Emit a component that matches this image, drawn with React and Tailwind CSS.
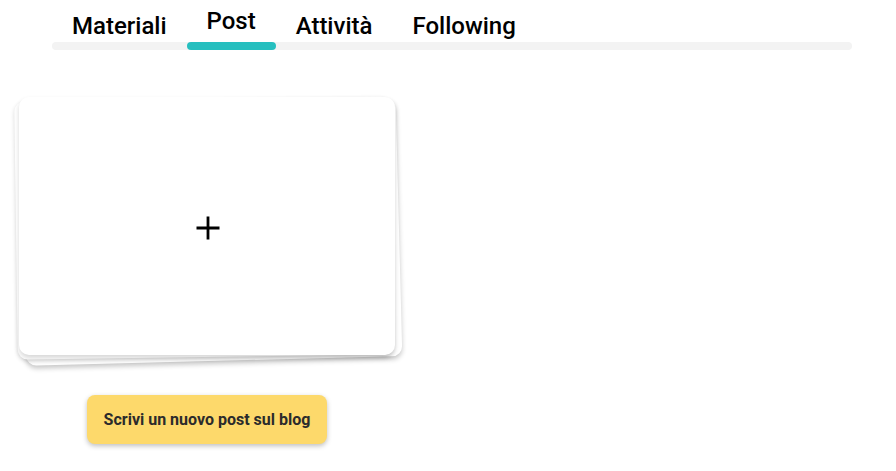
import React from "react";

const tabs = ["Materiali", "Post", "Attività", "Following"];

export default function App() {
  return (
    <div
      className="w-[896px] h-[471px] bg-white overflow-hidden"
      style={{ fontFamily: "Roboto, 'Liberation Sans', sans-serif" }}
    >
      <div className="ml-[52px] w-[800px] pt-[11px]">
        <div className="flex">
          {tabs.map((t, i) => (
            <div
              key={t}
              className={
                "px-[20px] h-[30px] leading-[30px] text-[24px] font-medium text-black " +
                (i === 1 ? "-translate-y-[5px]" : "")
              }
            >
              {t}
            </div>
          ))}
        </div>
        <div className="relative mt-[1px] h-[8px] rounded-full bg-[#f3f3f3]">
          <div className="absolute left-[135px] top-0 h-[8px] w-[89px] rounded-full bg-[#26bfbf]" />
        </div>
      </div>

      <div className="pl-[19px] pt-[47px] w-[395px]">
        <div className="relative w-[376px] h-[258px]">
          <div className="absolute inset-0 rounded-[10px] bg-white shadow-[0_3px_5px_rgba(0,0,0,0.22)] translate-x-[4px] translate-y-[6px] -rotate-[1.5deg]" />
          <div className="absolute inset-0 rounded-[10px] bg-white shadow-[0_2px_4px_rgba(0,0,0,0.16)] -translate-x-[3px] translate-y-[2px] -rotate-[0.8deg]" />
          <div className="relative w-full h-full rounded-[10px] bg-white shadow-[0_3px_5px_rgba(0,0,0,0.16)] flex items-center justify-center">
            <svg width="24" height="24" viewBox="0 0 24 24" className="ml-[1px] mt-[4px]">
              <path d="M12 0.5V23.5M0.5 12H23.5" stroke="#000" strokeWidth="2.8" fill="none" />
            </svg>
          </div>
        </div>
        <div className="flex justify-center mt-[40px]">
          <button className="w-[240px] h-[49px] rounded-[8px] bg-[#fdd96b] text-[16px] font-bold text-[#2b2b2b] shadow-[0_2px_5px_rgba(0,0,0,0.25)]">
            Scrivi un nuovo post sul blog
          </button>
        </div>
      </div>
    </div>
  );
}
